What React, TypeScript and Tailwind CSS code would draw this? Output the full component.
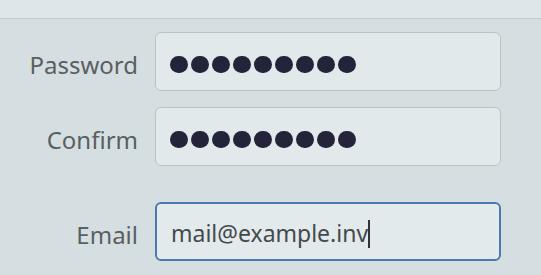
import React from "react";

function Dots() {
  return (
    <div className="flex gap-[3.5px] pt-[6px]">
      {Array.from({ length: 9 }, (_, i) => (
        <span key={i} className="block w-[17.5px] h-[17.5px] rounded-full bg-[#23243a]" />
      ))}
    </div>
  );
}

function Row({ label, children, focus, className }: { label: string; children: React.ReactNode; focus?: boolean; className?: string }) {
  return (
    <div className={`flex items-center ${className ?? ""}`}>
      <div className="w-[138px] pt-[6px] text-right text-[24px] text-[#596062] leading-none">{label}</div>
      <div
        className={`ml-[17px] w-[346px] h-[59px] rounded-[6px] flex items-center pl-[14px] ${
          focus ? "border-2 border-[#4d79ad] bg-[#e3eaec]" : "border border-[#b9c3c6] bg-[#e2e9eb]"
        }`}
      >
        {children}
      </div>
    </div>
  );
}

export default function App() {
  return (
    <div className="w-[541px] h-[275px] overflow-hidden bg-[#d5dfe1]" style={{ fontFamily: '"Noto Sans", "DejaVu Sans", sans-serif' }}>
      <div className="h-[19px] bg-[#dde6e9] border-b border-[#bfc9cc]" />
      <div className="flex flex-col">
        <Row label="Password" className="mt-[13px]">
          <Dots />
        </Row>
        <Row label="Confirm" className="mt-[16px]">
          <Dots />
        </Row>
        <Row label="Email" focus className="mt-[36px]">
          <span className="pt-[4px] text-[23px] text-[#44494c] leading-none">mail@example.inv</span>
          <span className="inline-block mt-[4px] w-[2px] h-[28px] bg-[#333]" />
        </Row>
      </div>
    </div>
  );
}
